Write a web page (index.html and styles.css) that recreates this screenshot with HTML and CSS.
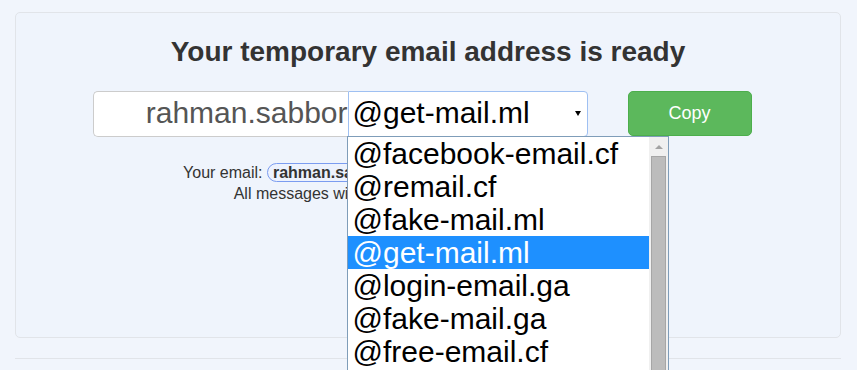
FILE: index.html
```html
<!DOCTYPE html>
<html>
<head>
<meta charset="utf-8">
<title>Temporary email</title>
<link rel="stylesheet" href="styles.css">
</head>
<body>
<div class="page">
  <div class="card">
    <h3 class="title">Your temporary email address is ready</h3>
    <div class="row">
      <div class="group">
        <div class="name-input">rahman.sabbor</div>
        <div class="domain-select">
          <span class="domain-value">@get-mail.ml</span>
          <span class="caret"></span>
          <div class="dropdown">
            <ul class="options">
              <li>@facebook-email.cf</li>
              <li>@remail.cf</li>
              <li>@fake-mail.ml</li>
              <li class="selected">@get-mail.ml</li>
              <li>@login-email.ga</li>
              <li>@fake-mail.ga</li>
              <li>@free-email.cf</li>
            </ul>
            <div class="scrollbar">
              <span class="sb-arrow"></span>
              <span class="sb-thumb"></span>
            </div>
          </div>
        </div>
      </div>
      <button class="copy-btn">Copy</button>
    </div>
    <p class="info info-email">Your email: <span class="badge">rahman.sabbor@get-mail.ml</span> is valid for the next hour</p>
    <p class="info">All messages will be automatically deleted after 1 hour.</p>
  </div>
  <div class="footer"></div>
</div>
</body>
</html>
```

FILE: styles.css
```css
html {
  overflow: hidden;
}
body {
  margin: 0;
  background: #f1f5fc;
  font-family: "Liberation Sans", Arial, sans-serif;
  color: #333;
}
.page {
  padding: 12px 16px 0 15px;
}
.card {
  box-sizing: border-box;
  height: 326px;
  background: #eff4fc;
  border: 1px solid #e1e4e9;
  border-radius: 5px;
  padding-top: 23px;
  text-align: center;
}
.title {
  margin: 0;
  font-size: 28px;
  line-height: 31px;
  font-weight: bold;
  color: #333;
}
.row {
  display: flex;
  justify-content: center;
  align-items: flex-start;
  margin-top: 24px;
  padding-right: 12px;
}
.group {
  display: flex;
}
.name-input {
  box-sizing: border-box;
  width: 255px;
  height: 46px;
  background: #fff;
  border: 1px solid #ccc;
  border-right: none;
  border-radius: 5px 0 0 5px;
  font-size: 30px;
  line-height: 42px;
  color: #555;
  text-align: right;
  padding-right: 0;
  white-space: nowrap;
}
.domain-select {
  position: relative;
  box-sizing: border-box;
  width: 240px;
  height: 46px;
  background: #fff;
  border: 1px solid #9fc0f2;
  border-radius: 0 4px 4px 0;
  padding-left: 4px;
  font-size: 30px;
  line-height: 42px;
  color: #000;
  text-align: left;
}
.caret {
  position: absolute;
  left: 226px;
  top: 19px;
  width: 0;
  height: 0;
  border-left: 3px solid transparent;
  border-right: 3px solid transparent;
  border-top: 5px solid #000;
}
.dropdown {
  position: absolute;
  left: -2px;
  top: 44px;
  z-index: 5;
  display: flex;
  box-sizing: border-box;
  width: 322px;
  height: 240px;
  background: #fff;
  border: 1px solid #7f9db9;
  overflow: hidden;
}
.options {
  list-style: none;
  margin: 0;
  padding: 0;
  flex: 1;
}
.options li {
  height: 33px;
  line-height: 33px;
  padding-left: 5px;
  font-size: 30px;
  color: #000;
  white-space: nowrap;
}
.options li.selected {
  background: #1e90ff;
  color: #fff;
}
.scrollbar {
  position: relative;
  width: 19px;
  background: #f0f0f0;
}
.sb-arrow {
  position: absolute;
  left: 6px;
  top: 8px;
  width: 0;
  height: 0;
  border-left: 4px solid transparent;
  border-right: 4px solid transparent;
  border-bottom: 4px solid #a3a3a3;
}
.sb-thumb {
  position: absolute;
  left: 2px;
  top: 19px;
  box-sizing: border-box;
  width: 15px;
  height: 400px;
  background: #bcbcbc;
  border: 1px solid #a6a6a6;
}
.copy-btn {
  box-sizing: border-box;
  width: 124px;
  height: 45px;
  margin-left: 40px;
  background: #5cb85c;
  border: 1px solid #4cae4c;
  border-radius: 5px;
  color: #fff;
  font-family: "Liberation Sans", Arial, sans-serif;
  font-size: 18px;
  padding: 0;
}
.info {
  margin: 0;
  font-size: 16px;
  line-height: 21px;
  color: #333;
}
.info-email {
  padding-right: 4px;
}
.row + .info {
  margin-top: 25px;
}
.badge {
  font-weight: bold;
  border: 1px solid #7b9cf0;
  border-radius: 10px;
  padding: 0 5px;
  background: #edf2fd;
}
.footer {
  margin-top: 20px;
  border-top: 1px solid #e1e4e9;
  height: 20px;
}
```
